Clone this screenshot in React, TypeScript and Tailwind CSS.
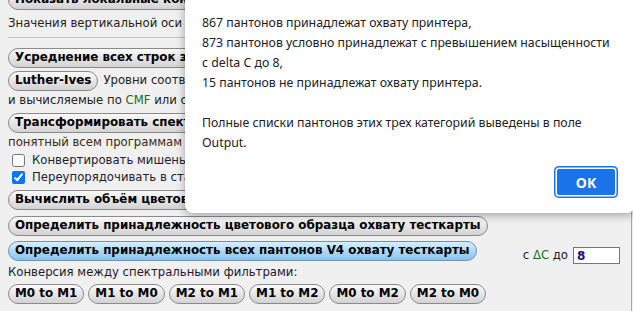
import React from "react";

const btn =
  "inline-flex items-center h-[20px] px-[6px] rounded-full border border-[#8a8a8a] bg-linear-to-b from-[#fafafa] to-[#d2d2d2] font-bold text-[11.9px] text-black whitespace-nowrap leading-none shrink-0";
const blueBtn =
  "inline-flex items-center h-[20px] px-[6px] rounded-full border border-[#6f94b3] bg-linear-to-b from-[#d8eefd] to-[#86c3f0] font-bold text-[11.9px] text-black whitespace-nowrap leading-none shrink-0";

export default function App() {
  return (
    <div
      className="relative w-[633px] h-[311px] overflow-hidden bg-[#f0f0f0] text-[#222]"
      style={{ fontFamily: '"DejaVu Sans", Verdana, sans-serif' }}
    >
      <div className="w-[632px] h-full border-r border-[#a8a8a8] pl-[8px] flex flex-col text-[11.7px]">
        <div className="h-[20px] mt-[-10px] flex items-center">
          <span className={btn}>Показать локальные контрасты спектров</span>
        </div>
        <div className="h-[18px] mt-[5px] flex items-center whitespace-nowrap">
          Значения вертикальной оси графиков в процентах отражения
        </div>
        <div className="mt-[4px] h-[1px] bg-[#c4c4c4]" />
        <div className="h-[20px] mt-[10px] flex items-center">
          <span className={btn}>Усреднение всех строк загруженного файла</span>
        </div>
        <div className="h-[20px] mt-[3px] flex items-center gap-[5px] whitespace-nowrap">
          <span className={btn}>Luther-Ives</span>
          <span>Уровни соответствия условиям Лютера-Айвса, измеряемые</span>
        </div>
        <div className="h-[18px] mt-[1px] flex items-center whitespace-nowrap">
          и вычисляемые по&nbsp;<span className="text-[#1d6b1d]">CMF</span>&nbsp;или спектрам
        </div>
        <div className="h-[20px] mt-[3px] flex items-center">
          <span className={btn}>Трансформировать спектральный файл в формат,</span>
        </div>
        <div className="h-[18px] mt-[1px] flex items-center whitespace-nowrap text-[#3b2a12]">
          понятный всем программам обработки
        </div>
        <label className="h-[17px] mt-[0px] flex items-center whitespace-nowrap text-[#1c2233]">
          <input type="checkbox" className="w-[13px] h-[13px] ml-[4px] mr-[7px]" />
          Конвертировать мишень
        </label>
        <label className="h-[17px] flex items-center whitespace-nowrap text-[#1c2233]">
          <input type="checkbox" defaultChecked className="w-[13px] h-[13px] ml-[4px] mr-[7px]" />
          Переупорядочивать в стандартный порядок
        </label>
        <div className="h-[20px] mt-[4px] flex items-center">
          <span className={btn}>Вычислить объём цветового охвата</span>
        </div>
        <div className="h-[20px] mt-[6px] flex items-center">
          <span className={btn}>Определить принадлежность цветового образца охвату тесткарты</span>
        </div>
        <div className="h-[20px] mt-[5px] flex items-start">
          <span className={blueBtn}>Определить принадлежность всех пантонов V4 охвату тесткарты</span>
          <div className="ml-auto mr-[11px] mt-[6px] flex items-center gap-[5px] whitespace-nowrap">
            <span>
              с <span className="text-[#1d6b1d]">ΔC</span> до
            </span>
            <input
              readOnly
              value="8"
              className="w-[47px] h-[17px] border border-[#767676] bg-white pl-[3px] text-[12px] font-bold text-[#2a0a80] outline-none"
            />
          </div>
        </div>
        <div className="h-[18px] mt-[3px] flex items-center whitespace-nowrap text-[#231a2e]">
          Конверсия между спектральными фильтрами:
        </div>
        <div className="h-[20px] mt-[2px] flex items-center gap-[4px]">
          <span className={btn}>M0 to M1</span>
          <span className={btn}>M1 to M0</span>
          <span className={btn}>M2 to M1</span>
          <span className={btn}>M1 to M2</span>
          <span className={btn}>M0 to M2</span>
          <span className={btn}>M2 to M0</span>
        </div>
      </div>

      <div
        className="absolute left-[185px] top-[-20px] w-[450px] h-[233px] bg-white rounded-[8px] shadow-[0_2px_10px_rgba(0,0,0,0.35)] flex flex-col"
        style={{ fontFamily: '"Noto Sans", "Open Sans", sans-serif' }}
      >
        <div className="pl-[17px] pt-[33px] text-[12.3px] leading-[20px] text-[#202124] whitespace-nowrap">
          <div>867 пантонов принадлежат охвату принтера,</div>
          <div>873 пантонов условно принадлежат с превышением насыщенности</div>
          <div>с delta C до 8,</div>
          <div>15 пантонов не принадлежат охвату принтера.</div>
          <div>&nbsp;</div>
          <div>Полные списки пантонов этих трех категорий выведены в поле</div>
          <div>Output.</div>
        </div>
        <div className="flex justify-end pr-[17px] mt-[13px]">
          <button className="w-[64px] h-[32px] rounded-[5px] bg-[#1a73e8] text-white font-bold text-[14px] shadow-[inset_0_0_0_1.5px_#1a73e8,inset_0_0_0_3px_#ffffff]">
            OK
          </button>
        </div>
      </div>
    </div>
  );
}
